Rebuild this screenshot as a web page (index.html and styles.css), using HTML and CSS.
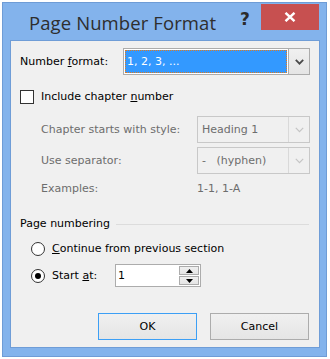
FILE: index.html
```html
<!DOCTYPE html>
<html>
<head>
<meta charset="utf-8">
<link rel="stylesheet" href="styles.css">
</head>
<body>
<div class="window">
  <div class="titlebar">
    <span class="title">Page Number Format</span>
    <span class="help">?</span>
    <span class="close">
      <svg width="12" height="10" viewBox="0 0 12 10"><path d="M1.5 0.8 L10.5 9.2 M10.5 0.8 L1.5 9.2" stroke="#fff" stroke-width="2.4" fill="none"/></svg>
    </span>
  </div>
  <div class="client">
    <div class="row row-format">
      <span class="label label-format">Number <u>f</u>ormat:</span>
      <div class="combo combo-format">
        <div class="combo-value"><span class="selection">1, 2, 3, ...</span></div>
        <div class="combo-btn"><svg width="9" height="6" viewBox="0 0 9 6"><path d="M0.8 0.8 L4.5 4.6 L8.2 0.8" stroke="#4a4a4a" stroke-width="1.8" fill="none"/></svg></div>
      </div>
    </div>
    <div class="row row-check">
      <span class="checkbox"></span>
      <span class="label">Include chapter <u>n</u>umber</span>
    </div>
    <div class="row row-sub row-style">
      <span class="label disabled sub-label">Chapter starts with style:</span>
      <div class="combo combo-disabled">
        <div class="combo-value">Heading 1</div>
        <div class="combo-btn"><svg width="9" height="6" viewBox="0 0 9 6"><path d="M0.8 0.8 L4.5 4.6 L8.2 0.8" stroke="#c4c4c4" stroke-width="1.2" fill="none"/></svg></div>
      </div>
    </div>
    <div class="row row-sub row-sep">
      <span class="label disabled sub-label">Use separator:</span>
      <div class="combo combo-disabled">
        <div class="combo-value">-&nbsp;&nbsp;&nbsp;(hyphen)</div>
        <div class="combo-btn"><svg width="9" height="6" viewBox="0 0 9 6"><path d="M0.8 0.8 L4.5 4.6 L8.2 0.8" stroke="#c4c4c4" stroke-width="1.2" fill="none"/></svg></div>
      </div>
    </div>
    <div class="row row-sub row-examples">
      <span class="label disabled sub-label">Examples:</span>
      <span class="label disabled examples-value">1-1, 1-A</span>
    </div>
    <div class="row row-group">
      <span class="label">Page numbering</span>
      <span class="group-line"></span>
    </div>
    <div class="row row-radio row-continue">
      <span class="radio"></span>
      <span class="label"><u>C</u>ontinue from previous section</span>
    </div>
    <div class="row row-radio row-start">
      <span class="radio checked"></span>
      <span class="label start-label">Start <u>a</u>t:</span>
      <div class="spin">
        <div class="spin-value">1</div>
        <div class="spin-btns">
          <div class="spin-btn"><svg width="7" height="4" viewBox="0 0 7 4"><path d="M0 4 L3.5 0 L7 4 Z" fill="#000"/></svg></div>
          <div class="spin-btn"><svg width="7" height="4" viewBox="0 0 7 4"><path d="M0 0 L3.5 4 L7 0 Z" fill="#000"/></svg></div>
        </div>
      </div>
    </div>
    <div class="row row-buttons">
      <button class="btn btn-default">OK</button>
      <button class="btn">Cancel</button>
    </div>
  </div>
</div>
</body>
</html>
```

FILE: styles.css
```css
html, body {
  margin: 0;
  padding: 0;
  background: #ffffff;
}
body {
  padding: 2px 0 0 2px;
  font-family: "DejaVu Sans", Verdana, sans-serif;
  font-size: 11px;
  color: #000;
}
.window {
  box-sizing: border-box;
  width: 325px;
  height: 355px;
  background: #83b3ec;
  border: 1px solid #6e9cd6;
  padding: 0 6px 8px 7px;
  display: flex;
  flex-direction: column;
}
.titlebar {
  height: 37px;
  flex: none;
  display: flex;
  align-items: flex-start;
  position: relative;
}
.title {
  font-family: "Open Sans", "Noto Sans", sans-serif;
  font-size: 18.5px;
  color: #2e2e2e;
  margin: 8px 0 0 19px;
  line-height: 24px;
  letter-spacing: 0.1px;
}
.help {
  position: absolute;
  left: 230px;
  top: 5px;
  font-family: "DejaVu Sans", sans-serif;
  font-weight: bold;
  font-size: 17px;
  color: #2b2b2b;
  line-height: 22px;
}
.close {
  position: absolute;
  left: 251px;
  top: 1px;
  width: 58px;
  height: 26px;
  background: #c75050;
  display: flex;
  align-items: center;
  justify-content: center;
}
.close svg { display: block; margin-top: -1px; }
.client {
  box-sizing: border-box;
  width: 310px;
  height: 309px;
  background: #f0f0f0;
  border: 1px solid #6f9dd7;
  display: flex;
  flex-direction: column;
  padding: 0 9px 0 9px;
}
.row {
  display: flex;
  align-items: center;
  flex: none;
}
.label { white-space: nowrap; line-height: 14px; }
.disabled { color: #6d6d6d; }
u { text-decoration: underline; text-underline-offset: 1px; }

.row-format { margin-top: 7px; height: 27px; }
.label-format { width: 103px; flex: none; }
.combo {
  box-sizing: border-box;
  display: flex;
  height: 27px;
  border: 1px solid #acacac;
  background: #fff;
}
.combo-format { width: 187px; }
.combo-value {
  flex: 1;
  display: flex;
  align-items: center;
  padding-left: 3px;
}
.combo-format .combo-value { padding: 1px; }
.selection {
  flex: 1;
  align-self: stretch;
  display: flex;
  align-items: center;
  background: #3399ff;
  color: #fff;
  padding-left: 2px;
  outline: 1px dotted #e07a1e;
  outline-offset: -1px;
}
.combo-btn {
  width: 20px;
  flex: none;
  border-left: 1px solid #acacac;
  background: linear-gradient(#f0f0f0, #e5e5e5);
  display: flex;
  align-items: center;
  justify-content: center;
}
.combo-format .combo-btn { border: 1px solid #acacac; border-right: none; margin: -1px 0; }
.combo-disabled { width: 113px; border-color: #c8c8c8; background: #f0f0f0; }
.combo-disabled .combo-value { color: #6d6d6d; padding-left: 4px; }
.combo-disabled .combo-btn { border-left: 1px solid #d9d9d9; background: #f0f0f0; }

.row-check { margin-top: 12px; height: 19px; }
.checkbox {
  box-sizing: border-box;
  width: 14px;
  height: 14px;
  border: 1px solid #333;
  background: #fff;
  margin-right: 7px;
  flex: none;
}
.row-sub { padding-left: 21px; }
.sub-label { width: 156px; flex: none; }
.row-style { margin-top: 10px; height: 27px; }
.row-sep { margin-top: 4px; height: 27px; }
.row-examples { margin-top: 6px; height: 18px; }

.row-group { margin-top: 18px; height: 16px; }
.group-line {
  flex: 1;
  height: 1px;
  background: #dcdcdc;
  margin-left: 6px;
  margin-right: 1px;
}
.row-radio { padding-left: 11px; }
.radio {
  box-sizing: border-box;
  width: 14px;
  height: 14px;
  border: 1px solid #333;
  border-radius: 50%;
  background: #fff;
  margin-right: 7px;
  flex: none;
  display: flex;
  align-items: center;
  justify-content: center;
}
.radio.checked::after {
  content: "";
  width: 6px;
  height: 6px;
  border-radius: 50%;
  background: #000;
}
.row-continue { margin-top: 8px; height: 18px; }
.row-start { margin-top: 6px; height: 23px; }
.start-label { width: 63px; flex: none; }
.spin {
  box-sizing: border-box;
  width: 86px;
  height: 23px;
  border: 1px solid #acacac;
  background: #fff;
  display: flex;
}
.spin-value { flex: 1; padding-left: 2px; display: flex; align-items: center; }
.spin-btns {
  width: 20px;
  display: flex;
  flex-direction: column;
  padding: 1px 1px 1px 0;
  gap: 1px;
}
.spin-btn {
  flex: 1;
  box-sizing: border-box;
  border: 1px solid #acacac;
  background: linear-gradient(#f0f0f0, #e5e5e5);
  display: flex;
  align-items: center;
  justify-content: center;
}
.spin-btn svg { display: block; }

.row-buttons { margin-top: 26px; height: 27px; padding-left: 78px; gap: 13px; }
.btn {
  box-sizing: border-box;
  width: 99px;
  height: 27px;
  border: 1px solid #acacac;
  background: linear-gradient(#f0f0f0, #e5e5e5);
  font-family: "DejaVu Sans", Verdana, sans-serif;
  font-size: 11px;
  color: #000;
  padding: 0;
  margin: 0;
}
.btn-default { border-color: #3c9ff5; }
```
